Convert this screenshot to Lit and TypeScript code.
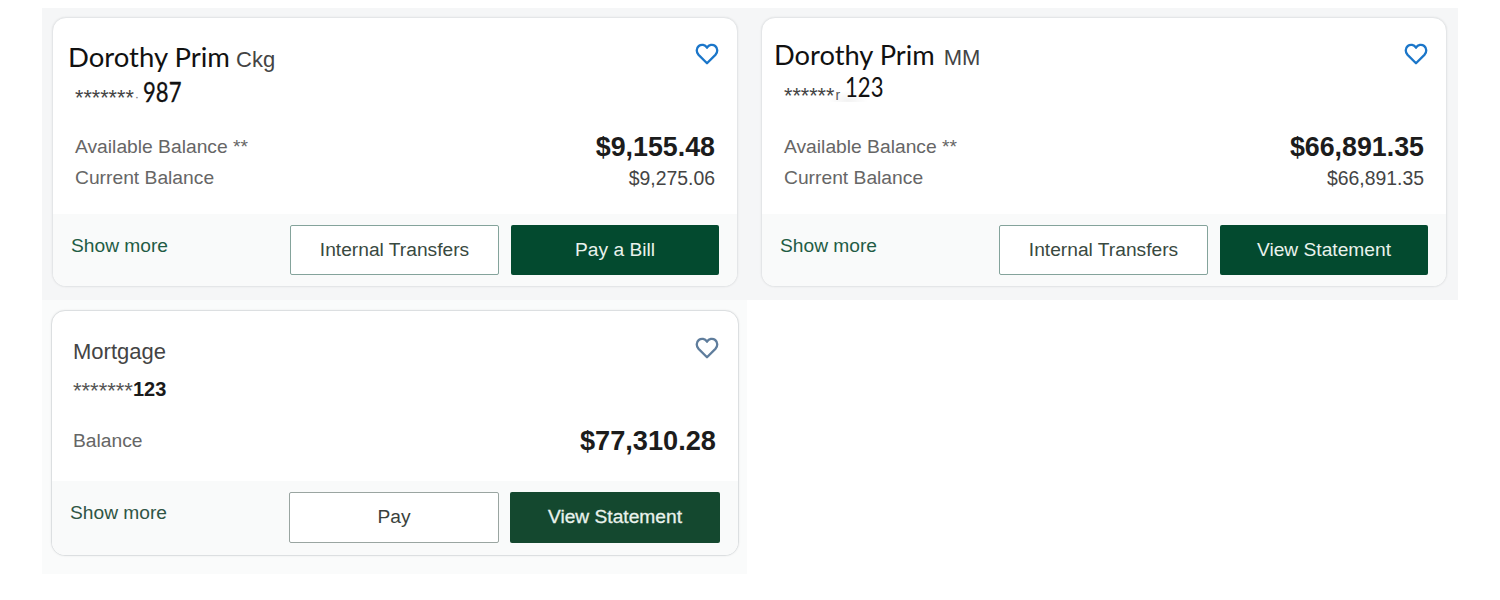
import { LitElement, html, css, nothing } from "lit";
import { customElement, property } from "lit/decorators.js";

const heart = html`<svg class="heart" viewBox="0 0 24 22" aria-hidden="true">
  <path d="M12 20.2 L3.6 11.9 C1 9.2 1.2 5.2 3.8 3 C6.4 .9 10 1.6 12 4.7 C14 1.6 17.6 .9 20.2 3 C22.8 5.2 23 9.2 20.4 11.9 Z"></path>
</svg>`;

@customElement("account-card")
class AccountCard extends LitElement {
  @property() variant = "a";
  @property() name = "";
  @property() kind = "";
  @property() mask = "";
  @property() mark = "";
  @property() last = "";
  @property() label1 = "";
  @property() amount1 = "";
  @property() label2 = "";
  @property() amount2 = "";
  @property() secondary = "";
  @property() primary = "";

  static styles = css`
    :host { display: block; }
    .card {
      box-sizing: border-box;
      width: 686px;
      height: 270px;
      display: flex;
      flex-direction: column;
      background: #fff;
      border: 1px solid #e4e6e8;
      border-radius: 14px;
      box-shadow: 0 0 2px rgba(0, 0, 0, .08);
      overflow: hidden;
      font-family: "Liberation Sans", Arial, sans-serif;
    }
    .body { box-sizing: border-box; flex: 1; min-height: 0; padding: 0 22px 0 15px; }
    .head { height: 113px; display: flex; justify-content: space-between; align-items: flex-start; }
    .titles { padding-top: 19px; }
    .name-row { display: flex; align-items: baseline; height: 40px; }
    .name { font-family: Lato, sans-serif; font-size: 27.5px; color: #111; line-height: 40px; }
    .kind { font-size: 22px; color: #444; margin-left: 6px; }
    .acct { display: flex; align-items: baseline; margin-left: 7px; height: 30px; }
    .mask { font-size: 21.6px; color: #444; transform: translateY(3px); line-height: 30px; }
    .mark { font-size: 13px; color: #777; margin-left: 1px; transform: translateY(-1px); }
    .last {
      font-family: Lato, sans-serif; font-size: 26px; color: #111; margin-left: 4px; line-height: 30px;
      display: inline-block; transform: scaleX(.85); transform-origin: left; -webkit-text-stroke: .3px #111;
    }
    .heart {
      width: 24px; height: 22px; margin-top: 25px; flex: none; margin-right: -4px;
      fill: none; stroke: #1b76c9; stroke-width: 2.3; stroke-linejoin: round;
    }
    .rows { padding-left: 7px; }
    .row { display: flex; justify-content: space-between; align-items: center; }
    .row-1 { height: 32px; }
    .row-2 { height: 30px; }
    .label { font-size: 19.25px; color: #666; }
    .big { font-size: 26.8px; font-weight: 700; color: #1c1c1c; }
    .small { font-size: 19.4px; color: #444; }
    .foot {
      box-sizing: border-box; height: 72px; flex: none; background: #f9fafa;
      display: flex; align-items: flex-start; padding: 11px 18px 0;
    }
    .more { font-size: 19.2px; color: #1f5c45; flex: 1; padding-top: 10px; }
    .btn {
      box-sizing: border-box; height: 50px; border-radius: 2px;
      display: flex; align-items: center; justify-content: center; font-size: 19.2px;
    }
    .outline { width: 209px; background: #fff; border: 1px solid #84a39b; color: #39493f; margin-right: 12px; }
    .solid { width: 208px; background: #034a2f; color: #e9f2ec; }

    .b .titles { padding-top: 17px; }
    .b .name { font-size: 27.3px; }
    .b .name-row { margin-left: -3px; }
    .b .kind { margin-left: 9px; }
    .b .acct {
      margin-top: -3px;
      background: radial-gradient(ellipse 20px 9px at 64px 28px, rgba(0, 0, 0, .05), transparent);
    }
    .b .mask { transform: translateY(6px); }
    .b .mark { color: #555; font-size: 14px; margin-left: 1px; transform: translateY(3px); }
    .b .last { margin-left: 5px; -webkit-text-stroke: 0; }

    .c { width: 688px; height: 246px; border-color: #dcdfe1; }
    .c .body { padding: 0 22px 0 21px; }
    .c .head { height: 116px; }
    .c .titles { padding-top: 21px; }
    .c .name { font-family: "Liberation Sans", sans-serif; font-size: 22px; color: #444; }
    .c .acct { margin-left: 0; margin-top: 2px; height: 36px; }
    .c .mask { font-size: 22px; color: #555; transform: translateY(2px); }
    .c .last {
      font-family: "Liberation Sans", sans-serif; font-size: 20px; font-weight: 700; margin-left: 0;
      color: #1a1a1a; transform: none; -webkit-text-stroke: 0;
    }
    .c .heart { stroke: #5f7d9c; margin-top: 26px; margin-right: -3px; }
    .c .rows { padding-left: 0; }
    .c .row-1 { height: 28px; }
    .c .big { font-size: 27.2px; }
    .c .foot { height: 74px; padding: 11px 18px 0; }
    .c .more { color: #2f5545; }
    .c .btn { height: 51px; padding-bottom: 2px; }
    .c .outline { width: 210px; border-color: #9aa5a1; margin-right: 11px; color: #3a3f3c; }
    .c .solid { width: 210px; background: #14482f; -webkit-text-stroke: .3px #e9f2ec; }
  `;

  render() {
    return html`<div class="card ${this.variant}">
      <div class="body">
        <div class="head">
          <div class="titles">
            <div class="name-row">
              <span class="name">${this.name}</span>
              ${this.kind ? html`<span class="kind">${this.kind}</span>` : nothing}
            </div>
            <div class="acct">
              <span class="mask">${this.mask}</span>
              ${this.mark ? html`<span class="mark">${this.mark}</span>` : nothing}
              <span class="last">${this.last}</span>
            </div>
          </div>
          ${heart}
        </div>
        <div class="rows">
          <div class="row row-1"><span class="label">${this.label1}</span><span class="big">${this.amount1}</span></div>
          ${this.label2
            ? html`<div class="row row-2"><span class="label">${this.label2}</span><span class="small">${this.amount2}</span></div>`
            : nothing}
        </div>
      </div>
      <div class="foot">
        <span class="more">Show more</span>
        <span class="btn outline">${this.secondary}</span>
        <span class="btn solid">${this.primary}</span>
      </div>
    </div>`;
  }
}

@customElement("app-root")
class AppRoot extends LitElement {
  static styles = css`
    :host { display: block; width: 1500px; height: 600px; background: #fff; overflow: hidden; }
    .top {
      box-sizing: border-box; width: 1416px; height: 292px; margin: 8px 0 0 42px;
      padding: 9px 11px 0 10px; background: #f5f6f7;
      display: flex; justify-content: space-between;
    }
    .bottom {
      box-sizing: border-box; width: 705px; height: 274px; margin-left: 42px;
      padding: 10px 0 0 9px; background: #fafbfb;
    }
  `;

  render() {
    return html`
      <div class="top">
        <account-card variant="a" name="Dorothy Prim" kind="Ckg" mask="*******" mark="·" last="987"
          label1="Available Balance **" amount1="$9,155.48"
          label2="Current Balance" amount2="$9,275.06"
          secondary="Internal Transfers" primary="Pay a Bill"></account-card>
        <account-card variant="b" name="Dorothy Prim" kind="MM" mask="******" mark="r" last="123"
          label1="Available Balance **" amount1="$66,891.35"
          label2="Current Balance" amount2="$66,891.35"
          secondary="Internal Transfers" primary="View Statement"></account-card>
      </div>
      <div class="bottom">
        <account-card variant="c" name="Mortgage" mask="*******" last="123"
          label1="Balance" amount1="$77,310.28"
          secondary="Pay" primary="View Statement"></account-card>
      </div>
    `;
  }
}
